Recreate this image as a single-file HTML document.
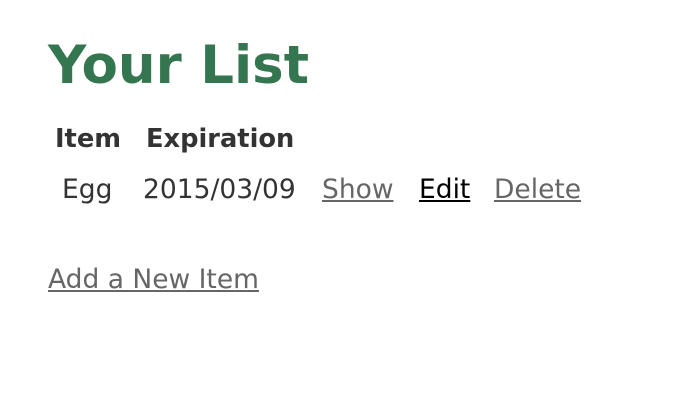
<!DOCTYPE html>
<html><head><style>
body{margin:0;width:696px;height:402px;background:#fff;font-family:"DejaVu Sans","Liberation Sans",sans-serif;position:relative;overflow:hidden}
span,a{position:absolute;white-space:nowrap;line-height:1}
.t{font-size:53px;font-weight:bold;color:#347650;left:48px;top:39px}
.h{font-size:25.7px;font-weight:bold;color:#333;top:127px}
.r{font-size:26.5px;color:#333;top:177px}
a{font-size:26.5px;color:#666;text-decoration:underline}
</style></head><body>
<span class="t">Your List</span>
<span class="h" style="left:55px">Item</span>
<span class="h" style="left:146px">Expiration</span>
<span class="r" style="left:62px">Egg</span>
<span class="r" style="left:143px">2015/03/09</span>
<a style="left:322px;top:177px">Show</a>
<a style="left:419px;top:177px;color:#000">Edit</a>
<a style="left:494px;top:177px">Delete</a>
<a style="left:48px;top:267px">Add a New Item</a>
</body></html>
